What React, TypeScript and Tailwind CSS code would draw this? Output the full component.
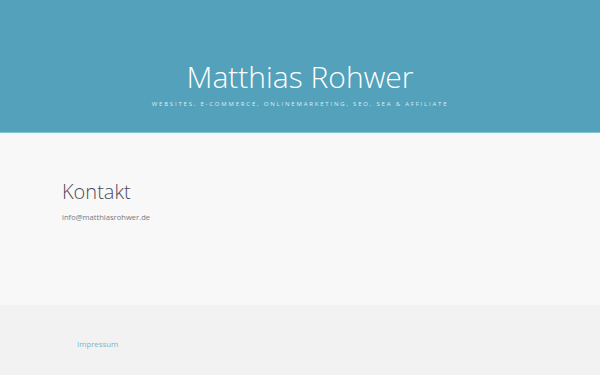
import React from 'react';

const App: React.FC = () => {
  return (
    <div className="min-h-[375px] flex flex-col bg-[#f2f2f2] font-['Open_Sans',sans-serif]">
      <header className="h-[133px] bg-[#53a1bb] border-b border-[#7fc3d6] flex flex-col items-center pt-[58px]">
        <h1 className="text-[30px] font-light text-white leading-[38px]">Matthias Rohwer</h1>
        <p className="mt-[3px] text-[6px] text-[#dbeef4] uppercase tracking-[1.8px] leading-[10px]">
          Websites, E-Commerce, Onlinemarketing, SEO, SEA &amp; Affiliate
        </p>
      </header>

      <main className="h-[172px] bg-[#f8f8f8] px-[62px] pt-[46px]">
        <h2 className="text-[20px] font-light text-[#4a4e5c] leading-[26px]">Kontakt</h2>
        <p className="mt-[6px] text-[7.6px] text-[#76787f] leading-[12px]">info@matthiasrohwer.de</p>
      </main>

      <footer className="flex-1 px-[77px] pt-[33px]">
        <a className="block text-[7.8px] text-[#74b6cb] leading-[12px]">Impressum</a>
      </footer>
    </div>
  );
};

export default App;
